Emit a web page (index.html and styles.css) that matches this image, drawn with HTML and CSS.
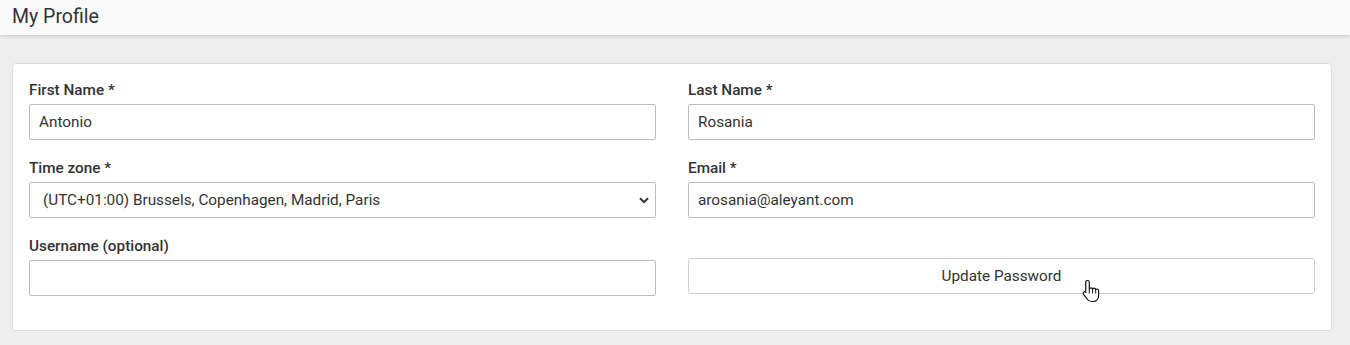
FILE: index.html
```html
<!DOCTYPE html>
<html>
<head>
<meta charset="utf-8">
<link rel="stylesheet" href="styles.css">
</head>
<body>
<header class="topbar"><h1 class="title">My Profile</h1></header>
<main class="content">
  <section class="card">
    <div class="grid">
      <div class="field">
        <label class="label">First Name *</label>
        <input class="input" type="text" value="Antonio">
      </div>
      <div class="field">
        <label class="label">Last Name *</label>
        <input class="input" type="text" value="Rosania">
      </div>
      <div class="field">
        <label class="label">Time zone *</label>
        <div class="select-wrap">
          <select class="select">
            <option>(UTC+01:00) Brussels, Copenhagen, Madrid, Paris</option>
          </select>
          <svg class="chevron" width="10" height="7" viewBox="0 0 10 7"><path d="M1 1.2 L5 5.2 L9 1.2" fill="none" stroke="#333" stroke-width="2"/></svg>
        </div>
      </div>
      <div class="field">
        <label class="label">Email *</label>
        <input class="input" type="text" value="arosania@aleyant.com">
      </div>
      <div class="field">
        <label class="label">Username (optional)</label>
        <input class="input" type="text" value="">
      </div>
      <div class="field field-button">
        <button class="btn" type="button">Update Password
          <svg class="cursor" width="18" height="24" viewBox="0 0 18 24">
            <path d="M5.5 1.5 C6.6 1.5 7.3 2.2 7.3 3.3 L7.3 10 C7.6 9.2 8.3 8.8 9 8.8 C9.8 8.8 10.4 9.3 10.6 10 C10.9 9.5 11.5 9.2 12.1 9.2 C12.9 9.2 13.5 9.8 13.7 10.5 C14 10.2 14.5 10 15 10 C16 10 16.6 10.8 16.6 11.8 L16.6 16.5 C16.6 20 14.4 22.5 11 22.5 L9.6 22.5 C7.4 22.5 6.2 21.6 5 20 L1.6 15.3 C1 14.5 1.2 13.5 1.9 13 C2.6 12.5 3.5 12.7 4 13.4 L3.7 13 L3.7 3.3 C3.7 2.2 4.4 1.5 5.5 1.5 Z" fill="#fff" stroke="#111" stroke-width="1.2" stroke-linejoin="round"/>
            <path d="M10.6 10 L10.6 14.5 M13.7 10.5 L13.7 14.5 M7.3 10 L7.3 14.5" stroke="#111" stroke-width="1" fill="none"/>
          </svg>
        </button>
      </div>
    </div>
  </section>
</main>
</body>
</html>
```
FILE: styles.css
```css
* { box-sizing: border-box; }
html, body {
  margin: 0;
  padding: 0;
  background: #eeeeee;
  font-family: Roboto, "Liberation Sans", Arial, sans-serif;
  color: #333;
}
.topbar {
  height: 35px;
  background: #fafafa;
  box-shadow: 0 1px 3px rgba(0,0,0,0.18);
  display: flex;
  align-items: center;
  padding-left: 12px;
  position: relative;
}
.title {
  margin: 0;
  font-size: 19.5px;
  font-weight: 400;
  color: #333;
  line-height: 24px;
  padding-bottom: 2px;
}
.content {
  padding: 28px 18px 0 12px;
}
.card {
  background: #fff;
  border: 1px solid #dcdcdc;
  border-radius: 4px;
  padding: 16px 16px 34px 16px;
}
.grid {
  display: grid;
  grid-template-columns: 1fr 1fr;
  column-gap: 32px;
  row-gap: 18px;
}
.field {
  display: flex;
  flex-direction: column;
}
.label {
  font-size: 15.3px;
  font-weight: 500;
  line-height: 20px;
  margin-bottom: 4px;
  color: #333;
}
.input, .select {
  height: 36px;
  width: 100%;
  border: 1px solid #bdbdbd;
  border-radius: 2px;
  font-family: Roboto, "Liberation Sans", Arial, sans-serif;
  font-size: 15.3px;
  color: #333;
  padding: 0 9px;
  background: #fff;
  outline: none;
  margin: 0;
}
.select-wrap {
  position: relative;
}
.select {
  appearance: none;
  -webkit-appearance: none;
  padding-left: 13px;
}
.chevron {
  position: absolute;
  right: 7px;
  top: 15px;
  pointer-events: none;
}
.field-button {
  justify-content: flex-end;
  padding-bottom: 2px;
}
.btn {
  position: relative;
  height: 36px;
  width: 100%;
  background: #fff;
  border: 1px solid #cfcfcf;
  border-radius: 3px;
  font-family: Roboto, "Liberation Sans", Arial, sans-serif;
  font-size: 15.3px;
  color: #333;
  padding: 0;
  margin: 0;
}
.cursor {
  position: absolute;
  left: 393px;
  top: 20px;
}
```
